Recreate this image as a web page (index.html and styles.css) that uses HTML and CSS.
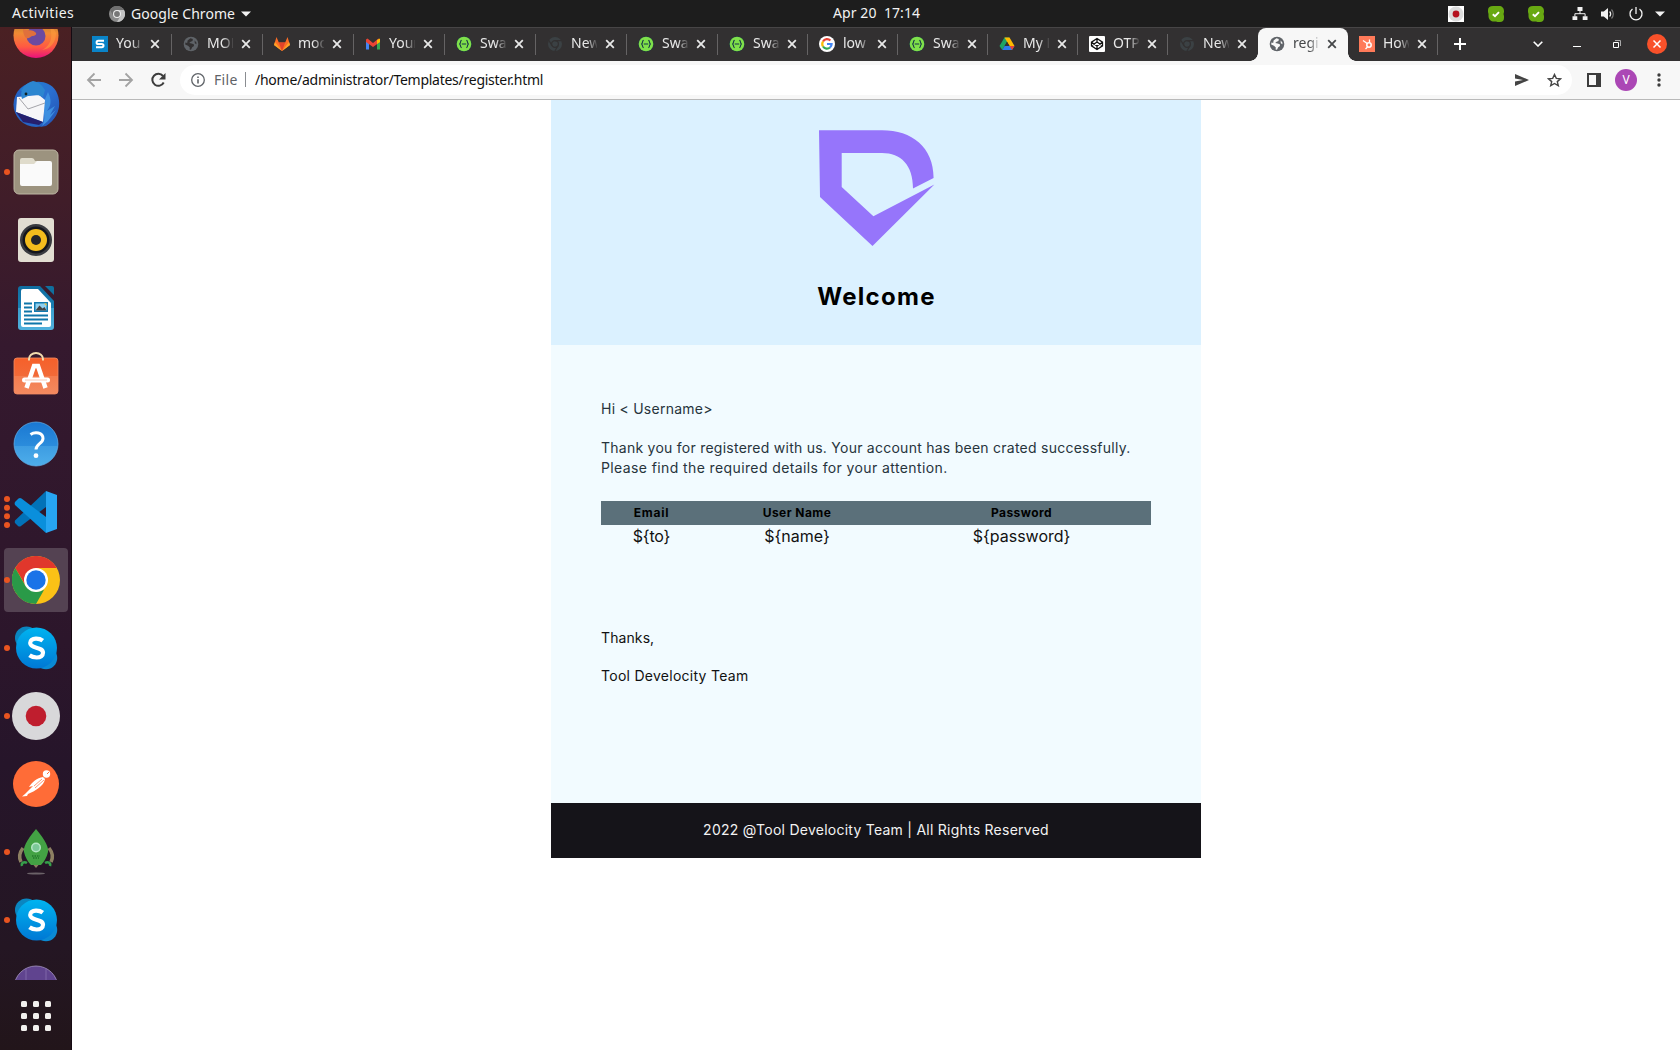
FILE: index.html
```html
<!DOCTYPE html>
<html lang="en">
<head>
<meta charset="utf-8">
<title>register.html</title>
<link rel="stylesheet" href="styles.css">
</head>
<body>
<svg class="defs" aria-hidden="true">
  <defs>
    <linearGradient id="g-fox" x1="0" y1="0" x2="0" y2="1"><stop offset=".2" stop-color="#b8802e"/><stop offset=".45" stop-color="#f08a34"/><stop offset=".75" stop-color="#ff5a42"/><stop offset="1" stop-color="#e8107c"/></linearGradient>
    <linearGradient id="g-bird" x1="0" y1="0" x2="1" y2="1"><stop offset="0" stop-color="#1f7fd0"/><stop offset=".5" stop-color="#2a6fd0"/><stop offset="1" stop-color="#2450b0"/></linearGradient>
    <linearGradient id="g-bag" x1="0" y1="0" x2="0" y2="1"><stop offset="0" stop-color="#f6602a"/><stop offset=".5" stop-color="#f26a38"/><stop offset=".5" stop-color="#f47c4e"/><stop offset="1" stop-color="#f38a60"/></linearGradient>
    <linearGradient id="g-help" x1="0" y1="0" x2="0" y2="1"><stop offset="0" stop-color="#1a78d2"/><stop offset=".54" stop-color="#2b8cdc"/><stop offset=".54" stop-color="#3d9ce2"/><stop offset="1" stop-color="#4eaeea"/></linearGradient>
    <linearGradient id="g-sky" x1="0" y1="0" x2="0" y2="1"><stop offset="0" stop-color="#00b4f0"/><stop offset="1" stop-color="#0078d4"/></linearGradient>
    <linearGradient id="g-doc" x1="0" y1="0" x2="0" y2="1"><stop offset="0" stop-color="#0f6da0"/><stop offset=".5" stop-color="#1a80b4"/><stop offset=".5" stop-color="#3b9fce"/><stop offset="1" stop-color="#50b0dc"/></linearGradient>
    <symbol id="globe" viewBox="0 0 16 16"><circle cx="8" cy="8" r="7.3" fill="currentColor"/><path d="M7.4 2.2 9.8 3 9.5 5 7.6 5.8 6.2 7 8.6 7.4 10.8 8.2 11 10 9.2 11.2 8 13.8 6.6 13.6 6.8 11.4 5 9.8 2.2 8.4 2.4 6.4 4.2 7 4.6 4.6ZM11.6 4.4 13.4 6.6 13.4 8.2 11.8 7.2Z" fill="var(--hole)"/></symbol>
    <symbol id="swag" viewBox="0 0 16 16"><circle cx="8" cy="8" r="7.8" fill="#1d3b41"/><circle cx="8" cy="8" r="7.3" fill="#7fe04a"/><path d="M5.700 4.400C3.700 4.400 5.300 7.600 3.300 8c2 .4.4 3.600 2.400 3.600M10.300 4.400c2 0 .4 3.200 2.400 3.600-2 .4-.4 3.600-2.400 3.600M5.800 8h4.400" fill="none" stroke="#173647" stroke-width="1.100"/></symbol>
    <symbol id="dim" viewBox="0 0 16 16"><circle cx="8" cy="8" r="7" fill="#3b4144"/><circle cx="8" cy="8" r="3.400" fill="none" stroke="#323031" stroke-width="1.200"/><path d="M8 4.600h6.400M5 9.700 1.900 4.400M11 9.700 7.900 15" stroke="#323031" stroke-width="1.200"/></symbol>
    <symbol id="x" viewBox="0 0 16 16"><path d="M4.200 4.200l7.600 7.600M11.800 4.200l-7.600 7.600" stroke="currentColor" stroke-width="1.800"/></symbol>
    <symbol id="skydot" viewBox="0 0 16 16"><path d="M5 0h6c3 0 5 2 5 5v1l-.5 2 .5 2v2c0 2.500-1.500 4-4 4H9.500L8 15.500H6c-3 0-5.500-2-5.500-5.500V8L0 6V4c0-2.500 2-4 5-4Z" fill="#68a912"/><path d="M4.800 8.300 7 10.200l4-4" fill="none" stroke="#fff" stroke-width="1.900"/></symbol>
    <symbol id="skype" viewBox="0 0 48 48"><circle cx="14.500" cy="14" r="11.500" fill="#0a86c0"/><circle cx="34" cy="34" r="11.200" fill="#0a8ad4"/><circle cx="24.500" cy="24" r="20.500" fill="url(#g-sky)"/><path d="M30.800 16.600c-2-1.500-4.500-2.100-7-2-3.600.1-5.600 2-5.600 4.400 0 6 12.800 3.300 12.800 9.800 0 2.800-2.500 4.700-6.300 4.700-2.600 0-5.200-.7-7.200-2.200" fill="none" stroke="#fff" stroke-width="4.200"/></symbol>
  </defs>
</svg>

<header class="topbar">
  <span class="activities">Activities</span>
  <span class="app">
    <svg width="16" height="16" viewBox="0 0 16 16"><circle cx="8" cy="8" r="8" fill="#8b8b8b"/><path d="M8 4h7A8 8 0 0 1 8 16l3.500-6Z" fill="#c2c2c2"/><path d="M1 4a8 8 0 0 1 14 0H8L4.500 10Z" fill="#6f6f6f"/><circle cx="8" cy="8" r="4" fill="#eee"/><circle cx="8" cy="8" r="2.900" fill="#777"/></svg>
    <span>Google Chrome</span>
    <svg width="10" height="6" viewBox="0 0 10 6"><path d="M0 .5h10L5 5.500Z" fill="#f2f2f2"/></svg>
  </span>
  <span class="clock">Apr 20&nbsp; 17:14</span>
  <div class="tray">
    <svg class="t-rec" width="16" height="16" viewBox="0 0 16 16"><path fill="#fff" d="M0 0h16v16H0z"/><circle cx="8" cy="8" r="7.500" fill="#dcdcdc"/><circle cx="8" cy="8" r="3.400" fill="#b5121f"/></svg>
    <svg class="t-sky" width="16" height="16"><use href="#skydot"/></svg>
    <svg class="t-sky2" width="16" height="16"><use href="#skydot"/></svg>
    <svg class="t-net" width="16" height="16" viewBox="0 0 16 16"><path d="M5.500 1h5v4h-5zM.5 10.200h4.800V14H.5zM10.700 10.200h4.800V14h-4.800z" fill="#f2f2f2"/><path d="M8 5v3M2.900 10.500V7.700h10.200v2.800" stroke="#f2f2f2" fill="none"/></svg>
    <svg class="t-vol" width="16" height="16" viewBox="0 0 16 16"><path d="M1 5.500h2.800L8 2v12L3.800 10.500H1Z" fill="#f2f2f2"/><path d="M9.600 5.500a3.500 3.500 0 0 1 0 5" stroke="#f2f2f2" stroke-width="1.300" fill="none"/><path d="M11.500 3.500a6.500 6.500 0 0 1 0 9" stroke="#777" stroke-width="1.200" fill="none"/></svg>
    <svg class="t-pow" width="16" height="16" viewBox="0 0 16 16"><path d="M8 1v7M4.500 3a6 6 0 1 0 7 0" stroke="#f2f2f2" stroke-width="1.300" fill="none"/></svg>
    <svg class="t-arr" width="10" height="6" viewBox="0 0 10 6"><path d="M0 .5h10L5 5.500Z" fill="#f2f2f2"/></svg>
  </div>
</header>

<div class="desktop">
  <nav class="dock">
    <div class="apps">
      <div class="item"><svg viewBox="0 0 48 48"><circle cx="24" cy="23.500" r="22.500" fill="url(#g-fox)"/><path d="M38 16c3 8 1 18-8 22 9-1 14-8 14-17-1-3-3-5-6-5Z" fill="#ff9a3c" opacity=".6"/><circle cx="24" cy="24" r="9.500" fill="#6a4aa0"/><path d="M11 17c4 2 8 0 12 3 3 2 0 4-3 4-2 1-3 3-6 2-2-2-3-5-3-9Z" fill="#e0703c"/></svg></div>
      <div class="item"><svg viewBox="0 0 48 48"><circle cx="24" cy="24.500" r="22.500" fill="#2563c4"/><path d="M8 10C16 0 36-2 44 11c6 11 4 26-10 35l-6 1c7-6 5-14 3-20Z" fill="url(#g-bird)"/><path d="M36 12c4 8 3 14-1 19l8-5-5 9 6-5-8 11-6 5c4-7 2-14 0-20Z" fill="#3d8fe0"/><path d="M5 17 27 15 33 20 31 42 4 32Z" fill="#f6f6f8"/><path d="M7 18 16 29 33 23" fill="none" stroke="#a4a4aa"/><path d="M4 32 31 42 27 45 11 42Z" fill="#26206e"/><path d="M10 19C7 10 13 3 21 1c6 1 9 4 12 9l-2 7c-6-3-12-3-17 0Z" fill="#2c86d0"/><circle cx="14" cy="14" r="1.400" fill="#122"/></svg></div>
      <div class="item run"><svg viewBox="0 0 48 48"><rect x="2" y="2" width="44" height="44" rx="5" fill="#9c937f" stroke="#bdb6a4"/><path d="M8 12q0-2 2-2h10q2 0 3 3h15v8H8Z" fill="#dfdbcb"/><path d="M8 16h14l3-3h13q2 0 2 2v21q0 2-2 2H10q-2 0-2-2Z" fill="#fafafa"/></svg></div>
      <div class="item"><svg viewBox="0 0 48 48"><rect x="6" y="2" width="36" height="44" rx="3" fill="#e2ded2"/><circle cx="24" cy="24" r="16" fill="#3a3c40"/><circle cx="24" cy="24" r="13.500" fill="#14161c"/><circle cx="24" cy="24" r="11" fill="#f3bc1d"/><circle cx="24" cy="24" r="5" fill="#24252a"/></svg></div>
      <div class="item"><svg viewBox="0 0 48 48"><path d="M9 2h19l14 15v26q0 3-3 3H9q-3 0-3-3V5q0-3 3-3Z" fill="url(#g-doc)"/><path d="M33 2h7q2 0 2 2v7Z" fill="#106f9e"/><path d="M11 5h15l13 14v22q0 2-2 2H11q-2 0-2-2V7q0-2 2-2Z" fill="#fff"/><path d="M12 19.500h8M12 23.500h8M12 27.500h8M12 31.500h24M12 35.500h24M12 39.500h18" stroke="#0f76aa" stroke-width="2"/><path d="M22 18h14v10H22z" fill="#127ab0"/><path d="M23.500 19.500h11v7h-11z" fill="#8fd0f0"/><path d="m23.500 26.500 4-5 3 3 2-1.500 2 3.500Z" fill="#444"/><path d="M32 19.500h2.500V22Z" fill="#f6c22a"/></svg></div>
      <div class="item"><svg viewBox="0 0 48 48"><rect x="2" y="6" width="44" height="36" rx="3" fill="url(#g-bag)" stroke="#f28c62" stroke-width=".8"/><path d="M17 8.500V7a7 6 0 0 1 14 0v1.500" fill="none" stroke="#f3dcae" stroke-width="2"/><path d="m14.500 36 7.500-22h4l7.500 22" fill="none" stroke="#fff" stroke-width="4.500"/><rect x="10" y="25.500" width="28" height="5" rx="2.500" fill="#fff"/><path d="M13 28h22" stroke="#f8c8b4"/></svg></div>
      <div class="item"><svg viewBox="0 0 48 48"><circle cx="24" cy="24" r="22" fill="url(#g-help)" stroke="#62b2ec" stroke-width=".7"/><path d="M18.500 14.500c4.500-3 12.500-2.200 12.500 4 0 5-7 5.500-7 11" fill="none" stroke="#fff" stroke-width="3"/><circle cx="24" cy="35.700" r="2.400" fill="#fff"/></svg></div>
      <div class="item run four"><svg viewBox="0 0 48 48"><path d="M3 35 6 38q1.500 1 3 0L34 19V3L3 32.500Q2.500 34 3 35Z" fill="#0272b8"/><path d="M3 14 6.500 10.500q1.500-1 3 0L34 29v16L3 17Q2.300 15.500 3 14Z" fill="#0a8fdc"/><path d="m34 3 11 4v34l-11 4Z" fill="#27a5f2"/></svg></div>
      <div class="item run focus"><svg viewBox="0 0 48 48"><circle cx="24" cy="24" r="24" fill="#fbc116"/><path d="M3.200 12a24 24 0 0 1 41.600 0H24L14 30Z" fill="#e0372c"/><path d="M3.200 12 13.600 30 24 36l8-2-8 14A24 24 0 0 1 3.200 12Z" fill="#2a9a48"/><circle cx="24" cy="24" r="12" fill="#fff"/><circle cx="24" cy="24" r="9.700" fill="#1a73e8"/></svg></div>
      <div class="item run"><svg><use href="#skype"/></svg></div>
      <div class="item run"><svg viewBox="0 0 48 48"><circle cx="24" cy="24" r="24" fill="#d8d8da"/><circle cx="24" cy="24" r="10.300" fill="#bf1e2e"/></svg></div>
      <div class="item"><svg viewBox="0 0 48 48"><circle cx="24" cy="24" r="23" fill="#ff6c37"/><circle cx="34.500" cy="14" r="3.700" fill="#fff"/><path d="M31 17C25 18 20 22 17 27l4-1-8 8-3 2.500 5-.5 1-2C23 31 32 26 33 19Z" fill="#fff"/><path d="m30 19-8 7M32 20l-9 8" stroke="#ff6c37" stroke-width=".7"/><path d="m35 14 2-2" stroke="#ff6c37"/></svg></div>
      <div class="item run"><svg viewBox="0 0 48 48"><path d="M11 20c-4 5-4 10-2 14M37 20c4 5 4 10 2 14" fill="none" stroke="#8d8062" stroke-width="3.500"/><path d="M19 34h10l-5 6Z" fill="#8d8062"/><path d="M24 1C14 13 11 20 12 24c1 5 4 10 7 13h10c3-3 6-8 7-13 1-4-2-11-12-23Z" fill="#43a244"/><circle cx="24" cy="19.500" r="5" fill="#b4e6c4"/><circle cx="24" cy="19.500" r="3.500" fill="#7cc898"/><path d="M20 28h8M21 30h6" stroke="#23772b" stroke-width="1.500" stroke-dasharray="1.500 1"/><path d="M15 35c-3-2-6 0-5 3M33 35c3-2 6 0 5 3" fill="none" stroke="#35a04a" stroke-width="2.500"/><ellipse cx="24" cy="45.500" rx="9" ry="1" fill="#6b6268"/></svg></div>
      <div class="item run"><svg><use href="#skype"/></svg></div>
      <div class="item"><svg viewBox="0 0 48 48"><circle cx="24" cy="24" r="22" fill="#60448f" stroke="#a796c4" stroke-width=".8"/><path d="M14 4v14M34 4v14" stroke="#7f66a8"/></svg></div>
    </div>
    <div class="launcher"><i></i><i></i><i></i><i></i><i></i><i></i><i></i><i></i><i></i></div>
  </nav>

  <main class="window">
    <div class="tabstrip">
      <div class="tab w"><svg class="fav" viewBox="0 0 16 16"><path fill="#0a84c8" d="M0 0h16v16H0z"/><path d="M12 4.800H6.200q-1.600 0-1.600 1.600T6.200 8h3.600q1.700 0 1.700 1.600t-1.700 1.600H4" fill="none" stroke="#fff" stroke-width="2"/></svg><span>You</span><svg class="close"><use href="#x"/></svg></div>
      <div class="tab w"><svg class="fav gl"><use href="#globe"/></svg><span>MOD</span><svg class="close"><use href="#x"/></svg></div>
      <div class="tab w"><svg class="fav" viewBox="0 0 16 16"><path d="M8 15 0 9 2.500 1l2.300 5.500h6.400L13.500 1 16 9Z" fill="#fc6d26"/><path d="M8 15 4.800 6.500h6.400Z" fill="#e24329"/><path d="m0 9 1-3 7 9ZM16 9l-1-3-7 9Z" fill="#fca326"/></svg><span>mod</span><svg class="close"><use href="#x"/></svg></div>
      <div class="tab w"><svg class="fav" viewBox="0 0 16 16"><path d="M1 4v9.500h3V7Z" fill="#4285f4"/><path d="M15 4v9.500h-3V7Z" fill="#34a853"/><path d="M1 3.500 2.500 2.500 8 7l5.500-4.500L15 3.500V6L8 11 1 6Z" fill="#ea4335"/><path d="M12 4 15 2.500V6l-3 2Z" fill="#fbbc04"/></svg><span>Your</span><svg class="close"><use href="#x"/></svg></div>
      <div class="tab w"><svg class="fav"><use href="#swag"/></svg><span>Swag</span><svg class="close"><use href="#x"/></svg></div>
      <div class="tab w"><svg class="fav"><use href="#dim"/></svg><span>New</span><svg class="close"><use href="#x"/></svg></div>
      <div class="tab w"><svg class="fav"><use href="#swag"/></svg><span>Swag</span><svg class="close"><use href="#x"/></svg></div>
      <div class="tab"><svg class="fav"><use href="#swag"/></svg><span>Swag</span><svg class="close"><use href="#x"/></svg></div>
      <div class="tab"><svg class="fav" viewBox="0 0 16 16"><circle cx="8" cy="8" r="8" fill="#fff"/><g fill="none" stroke-width="2.200"><path d="M11.400 4.500A4.700 4.700 0 0 0 4 5.500" stroke="#ea4335"/><path d="M4 5.500a4.700 4.700 0 0 0 0 5" stroke="#fbbc05"/><path d="M4 10.500a4.700 4.700 0 0 0 7 1" stroke="#34a853"/><path d="M11 11.500A4.700 4.700 0 0 0 12.600 8H8" stroke="#4285f4"/></g></svg><span>low</span><svg class="close"><use href="#x"/></svg></div>
      <div class="tab"><svg class="fav"><use href="#swag"/></svg><span>Swag</span><svg class="close"><use href="#x"/></svg></div>
      <div class="tab"><svg class="fav" viewBox="0 0 16 16"><path d="M5.500 1.500h5L3.300 14 .5 10Z" fill="#1fa463"/><path d="m5.500 1.500 5 0L15.500 10h-5Z" fill="#ffba00"/><path d="M3.300 14 5.600 10h9.900l-2.500 4Z" fill="#2f7de9"/><path d="M15.500 10 13 14l-2.400-4Z" fill="#ea4335"/><path d="M8 5.800 5.600 10h4.900Z" fill="#323031"/></svg><span>My D</span><svg class="close"><use href="#x"/></svg></div>
      <div class="tab"><svg class="fav" viewBox="0 0 16 16"><rect width="16" height="16" rx="1" fill="#fff"/><path d="m8 2.500 5.500 3.700v3.600L8 13.500 2.500 9.800V6.200ZM8 2.500v3.600M8 10v3.500M2.500 6.200 8 10l5.500-3.800M2.500 9.800 8 6l5.500 3.800" fill="none" stroke="#111" stroke-width="1.300"/></svg><span>OTP</span><svg class="close"><use href="#x"/></svg></div>
      <div class="tab"><svg class="fav"><use href="#dim"/></svg><span>New</span><svg class="close"><use href="#x"/></svg></div>
      <div class="tab active"><svg class="fav gl"><use href="#globe"/></svg><span>regis</span><svg class="close"><use href="#x"/></svg></div>
      <div class="tab"><svg class="fav" viewBox="0 0 16 16"><path fill="#ff7a59" d="M0 0h16v16H0z"/><circle cx="10" cy="9" r="2.200" fill="none" stroke="#fff" stroke-width="1.500"/><path d="M10.500 3.500v3M4 4.500l4.200 3M8.500 11 6.500 13" stroke="#fff" stroke-width="1.300"/></svg><span>How</span><svg class="close"><use href="#x"/></svg></div>
      <svg class="newtab" width="12" height="12" viewBox="0 0 12 12"><path d="M6 0v12M0 6h12" stroke="#fff" stroke-width="2"/></svg>
      <div class="controls">
        <svg class="c-list" width="10" height="6" viewBox="0 0 10 6"><path d="m.7.7 4.300 4.300L9.300.7" fill="none" stroke="#fff" stroke-width="1.600"/></svg>
        <svg class="c-min" width="8" height="8" viewBox="0 0 8 8"><path d="M0 6.500h8" stroke="#fff"/></svg>
        <svg class="c-max" width="8" height="8" viewBox="0 0 8 8"><path d="M.5 2.500h5v5h-5z" fill="none" stroke="#fff"/><path d="M2 .5h5.500V6" fill="none" stroke="#aaa"/></svg>
        <svg class="c-close" width="20" height="20" viewBox="0 0 20 20"><circle cx="10" cy="10" r="10" fill="#f9512a"/><path d="m6.500 6.500 7 7m0-7-7 7" stroke="#fff" stroke-width="1.500"/></svg>
      </div>
    </div>
    <div class="toolbar">
      <svg width="16" height="16" viewBox="0 0 16 16"><path d="M15 8H2M8.500 1.500 2 8l6.500 6.500" fill="none" stroke="#a3a3a3" stroke-width="1.800"/></svg>
      <svg width="16" height="16" viewBox="0 0 16 16"><path d="M1 8h13M7.500 1.500 14 8l-6.500 6.500" fill="none" stroke="#a3a3a3" stroke-width="1.800"/></svg>
      <svg width="16" height="16" viewBox="0 0 16 16"><path d="M13.700 10.500A6 6 0 1 1 13 4" fill="none" stroke="#3c3c3c" stroke-width="2"/><path d="M15.500 1v6.500H9Z" fill="#3c3c3c"/></svg>
      <div class="omnibox">
        <svg width="14" height="14" viewBox="0 0 14 14"><circle cx="7" cy="7" r="6.300" fill="none" stroke="#5f6368" stroke-width="1.300"/><path d="M7 6.200V10.500M7 3.500V5" stroke="#5f6368" stroke-width="1.600"/></svg>
        <span class="scheme">File</span>
        <span class="url">/home/administrator/Templates/register.html</span>
        <svg class="send" width="14" height="12" viewBox="0 0 14 12"><path d="M0 0 14 6 0 12V7.500L8 6 0 4.500Z" fill="#444"/></svg>
        <svg class="star" width="15" height="14" viewBox="0 0 15 14"><path d="m7.500 1.500 1.800 3.900 4.200.4-3.200 2.800 1 4.100-3.800-2.200-3.800 2.200 1-4.100L1.500 5.800l4.200-.4Z" fill="none" stroke="#444" stroke-width="1.400"/></svg>
      </div>
      <svg class="panel" width="14" height="14" viewBox="0 0 14 14"><path d="M1 1h12v12H1z" fill="none" stroke="#3c3c3c" stroke-width="2"/><path d="M9 0h5v14H9z" fill="#3c3c3c"/></svg>
      <span class="avatar">V</span>
      <svg class="dots" width="4" height="14" viewBox="0 0 4 14"><circle cx="2" cy="2" r="1.700" fill="#3c3c3c"/><circle cx="2" cy="7" r="1.700" fill="#3c3c3c"/><circle cx="2" cy="12" r="1.700" fill="#3c3c3c"/></svg>
    </div>
    <div class="viewport">
      <article class="mail">
        <header class="hero">
          <svg width="118" height="118" viewBox="0 0 118 118"><path d="M1 1.300H64C94 1.300 115.500 18 115.600 49L95 59.500C95 36 83 24 64 24H23.700V58L55.400 87.300 116.400 55.500 54.500 117 2 68Z" fill="#9675fb"/></svg>
          <h1>Welcome</h1>
        </header>
        <section class="body">
          <p class="hi">Hi &lt; Username&gt;</p>
          <p class="msg">Thank you for registered with us. Your account has been crated successfully.<br><span class="line2">Please find the required details for your attention.</span></p>
          <table>
            <tr><th>Email</th><th>User Name</th><th>Password</th></tr>
            <tr><td class="to">${to}</td><td>${name}</td><td>${password}</td></tr>
          </table>
          <p class="thanks">Thanks,</p>
          <p class="team">Tool Develocity Team</p>
        </section>
        <footer>2022 @Tool Develocity Team | All Rights Reserved</footer>
      </article>
    </div>
  </main>
</div>
</body>
</html>
```
FILE: styles.css
```css
* { box-sizing: border-box; }
body { margin: 0; width: 1680px; height: 1050px; overflow: hidden; background: #fff; font-family: "Noto Sans", "Open Sans", sans-serif; }
svg { display: block; flex: none; }
.defs { position: absolute; width: 0; height: 0; }

.topbar { display: grid; grid-template-columns: 109px 724px 1fr auto; align-items: center; height: 27px; background: #1d1d1d; color: #f2f2f2; font-size: 14px; line-height: 26px; }
.topbar > span { height: 27px; }
.activities { padding-left: 12px; letter-spacing: .37px; }
.app { display: flex; align-items: center; gap: 6px; }
.app span { letter-spacing: .05px; }
.clock { letter-spacing: .08px; }
.tray { display: flex; align-items: center; width: 232px; }
.t-sky, .t-sky2 { margin-left: 24px; }
.t-net { margin-left: 28px; }
.t-vol { margin-left: 12px; }
.t-pow { margin-left: 12px; }
.t-arr { margin-left: 11px; }

.desktop { display: flex; height: 1023px; }
.dock { display: flex; flex-direction: column; width: 72px; padding-top: 2px; background: linear-gradient(#4a2023 0%, #401d29 17%, #35192e 31%, #2c162b 60%, #26152a 72%, #241623 90%, #22151a 100%); border-right: 1px solid #150a12; }
.apps { display: flex; flex-direction: column; height: 951px; overflow: hidden; gap: 4px; padding-left: 4px; }
.item { display: flex; align-items: center; justify-content: center; position: relative; flex: none; width: 64px; height: 64px; border-radius: 4px; }
.item:first-child { margin-top: -25px; }
.item svg { width: 48px; height: 48px; }
.focus { background: #544252; }
.run::before { content: ""; position: absolute; left: 0; top: 29px; width: 6px; height: 6px; border-radius: 50%; background: #e95420; }
.four::before { top: 16px; box-shadow: 0 8.700px #e95420, 0 17.300px #e95420, 0 26px #e95420; }
.launcher { display: grid; grid-template-columns: repeat(3, 6px); gap: 6px; padding: 21px 0 0 21px; }
.launcher i { height: 6px; border-radius: 1.500px; background: #f2f0ee; }

.window { flex: 1; display: flex; flex-direction: column; min-width: 0; }
.tabstrip { display: flex; align-items: center; height: 34px; padding-left: 9px; background: #323031; border-top: 1px solid #474546; color: #e8e8e8; font-size: 14px; --hole: #323031; }
.tab { display: flex; align-items: center; position: relative; flex: none; width: 90px; height: 33px; padding: 0 0 1px 11px; }
.tab.w { width: 91px; }
.tab::after { content: ""; position: absolute; right: 0; top: 6px; width: 1px; height: 21px; background: #656364; }
.fav { width: 16px; height: 16px; }
.gl { color: #5f6368; }
.tab span { width: 26px; margin: 0 5px 0 8px; overflow: hidden; white-space: nowrap; line-height: 30px; height: 32px; -webkit-mask-image: linear-gradient(90deg, #000 60%, transparent 105%); mask-image: linear-gradient(90deg, #000 60%, transparent 105%); }
.close { width: 16px; height: 16px; }
.tab.active { background: #f7f7f7; color: #454749; border-radius: 8px 8px 0 0; --hole: #f7f7f7; }
.tab.active::before, .tab.active::after { content: ""; position: absolute; top: auto; bottom: 0; width: 8px; height: 8px; background: radial-gradient(circle at 0 0, #323031 7.500px, #f7f7f7 8px); }
.tab.active::before { left: -8px; }
.tab.active::after { right: -8px; background: radial-gradient(circle at 100% 0, #323031 7.500px, #f7f7f7 8px); }
.tab:has(+ .active)::after { display: none; }
.newtab { margin: 0 0 1px 16px; }
.controls { display: flex; align-items: center; margin-left: auto; padding: 0 13px 1px 0; }
.c-min { margin-left: 30px; }
.c-max { margin-left: 32px; }
.c-close { margin-left: 26px; }

.toolbar { display: flex; align-items: center; height: 39px; padding: 0 19px 1px 14px; background: #f7f7f7; border-bottom: 1px solid #b9b9b9; font-size: 14px; }
.toolbar > svg + svg { margin-left: 16px; }
.omnibox { display: flex; align-items: center; width: 1392px; height: 30px; margin-left: 14px; padding: 0 10px 0 11px; border-radius: 15px; background: #fff; line-height: 30px; }
.scheme { width: 32px; margin-left: 9px; color: #5f6368; letter-spacing: .3px; background: linear-gradient(#8a8d91, #8a8d91) right center / 1px 15px no-repeat; }
.url { margin-left: 9px; color: #111; letter-spacing: -.26px; }
.send { margin-left: auto; }
.star { margin-left: 18px; }
.panel { margin-left: 15px; }
.avatar { width: 22px; height: 22px; margin-left: 14px; border-radius: 50%; background: #ab47b5; color: #fff; font-size: 12px; line-height: 22px; text-align: center; }
.toolbar .dots { margin-left: 20px; }

.viewport { flex: 1; }
.mail { width: 650px; margin-left: 479px; font-family: Inter, "Open Sans", sans-serif; color: #111; }
.hero { height: 245px; padding-top: 29px; background: #dbf1ff; }
.hero svg { margin-left: 267px; }
h1 { margin: 35px 0 0; font-size: 24px; font-weight: 700; line-height: 30px; text-align: center; color: #000; letter-spacing: 1.300px; text-indent: 1px; }
.body { height: 458px; padding: 54px 50px 0; background: #f2fbff; font-size: 14px; line-height: 20px; }
p { margin: 0; white-space: nowrap; }
.hi, .msg { color: #27343c; letter-spacing: .25px; }
.line2 { letter-spacing: .39px; }
.msg { margin-top: 19px; }
table { width: 550px; margin-top: 23px; border-collapse: collapse; table-layout: fixed; }
th, td { padding: 0; text-align: center; }
th:nth-child(1) { width: 101px; letter-spacing: .8px; }
th:nth-child(2) { width: 190px; }
th { height: 24px; background: #5b707a; color: #000; font-size: 12px; font-weight: 700; letter-spacing: .45px; }
td { font-size: 16px; line-height: 23px; }
td.to { letter-spacing: -.2px; }
.thanks { margin-top: 80px; letter-spacing: .1px; }
.team { margin-top: 18px; letter-spacing: .27px; }
footer { height: 55px; background: #151419; color: #f2f2f2; font-size: 14px; line-height: 54px; text-align: center; white-space: nowrap; letter-spacing: .25px; }
```
